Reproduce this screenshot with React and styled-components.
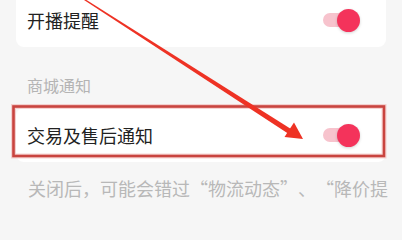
import React from 'react';
import styled, { createGlobalStyle } from 'styled-components';

const GlobalStyle = createGlobalStyle`
  html, body {
    margin: 0;
    padding: 0;
  }
  body {
    background: #f6f6f6;
    font-family: "Noto Sans CJK SC", "Noto Sans", sans-serif;
  }
`;

const Toggle = ({ on }) => (
  <ToggleBox>
    <Track on={on ? 1 : 0} />
    <Knob on={on ? 1 : 0} />
  </ToggleBox>
);

// red hand-drawn highlight box + arrow laid over the screenshot
const Annotation = () => (
  <Overlay width="402" height="200" viewBox="0 0 402 200">
    <rect x="13.5" y="106.5" width="370.5" height="49.5" fill="none" stroke="#f2b8b6" strokeWidth="5" opacity="0.6" />
    <rect x="13.5" y="106.5" width="370.5" height="49.5" fill="none" stroke="#c9443f" strokeWidth="2.6" />
    <polygon points="84,0 86.5,0 291,129 288,133.5" fill="#ee3224" />
    <polygon points="303,139 284.5,137 294,122.5" fill="#ee3224" />
  </Overlay>
);

export default function App() {
  return (
    <>
      <GlobalStyle />
      <Screen>
        <Content>
          <Card>
            <Row>
              <RowTitle>开播提醒</RowTitle>
              <Toggle on />
            </Row>
          </Card>
          <SectionLabel>商城通知</SectionLabel>
          <Card>
            <Row>
              <RowTitle>交易及售后通知</RowTitle>
              <Toggle on />
            </Row>
          </Card>
          <Note>
            关闭后，可能会错过<Quote side="open">“</Quote>物流动态<Quote side="close">”</Quote>、<Quote side="open">“</Quote>降价提
          </Note>
        </Content>
        <Annotation />
      </Screen>
    </>
  );
}

const Screen = styled.div`
  position: relative;
  width: 402px;
  height: 200px;
  overflow: hidden;
  background: #f6f6f6;
`;

const Content = styled.div`
  margin-top: -7px;
  padding: 0 16px;
`;

const Card = styled.div`
  background: #ffffff;
  border-radius: 8px;
`;

const Row = styled.div`
  display: flex;
  align-items: center;
  justify-content: space-between;
  height: 54px;
  padding: 0 26px 0 11px;
`;

const RowTitle = styled.div`
  font-size: 18px;
  line-height: 24px;
  color: #222222;
`;

const ToggleBox = styled.div`
  position: relative;
  width: 37px;
  height: 23px;
  display: flex;
  align-items: center;
`;

const Track = styled.div`
  width: 30px;
  height: 14px;
  border-radius: 7px;
  background: ${p => (p.on ? '#f7c3cd' : '#e0e0e0')};
`;

const Knob = styled.div`
  position: absolute;
  top: 0;
  right: ${p => (p.on ? '0' : '14px')};
  width: 23px;
  height: 23px;
  border-radius: 50%;
  background: ${p => (p.on ? '#f4335b' : '#ffffff')};
  box-shadow: 0 1px 3px rgba(0, 0, 0, 0.18);
`;

const SectionLabel = styled.div`
  padding: 29px 11px 14px;
  font-size: 16px;
  line-height: 18px;
  color: #b4b4b4;
`;

const Note = styled.div`
  padding: 16px 0 0 12px;
  font-size: 18px;
  line-height: 20px;
  color: #b8b8b8;
  white-space: nowrap;
`;

const Quote = styled.span`
  display: inline-block;
  width: 1em;
  text-align: ${p => (p.side === 'open' ? 'right' : 'left')};
`;

const Overlay = styled.svg`
  position: absolute;
  top: 0;
  left: 0;
  pointer-events: none;
`;
